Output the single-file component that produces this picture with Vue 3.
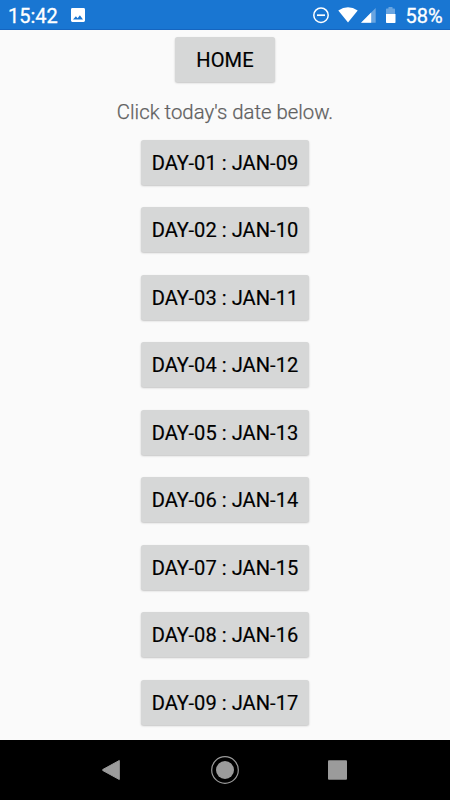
<script setup>
const days = Array.from({ length: 9 }, (_, i) => {
  const day = String(i + 1).padStart(2, '0')
  const date = String(i + 9).padStart(2, '0')
  return `DAY-${day} : JAN-${date}`
})
</script>

<template>
  <div class="screen">
    <header class="status">
      <span class="clock">15:42</span>
      <svg class="picture" width="14" height="14" viewBox="0 0 14 14">
        <path fill="#fff" fill-rule="evenodd" d="M1.4 0h11.2Q14 0 14 1.4v11.2q0 1.4-1.4 1.4H1.4Q0 14 0 12.600V1.400Q0 0 1.400 0zM2 11.500h10L8.900 7.200 6.600 10.300 4.900 8.200z" />
      </svg>
      <svg class="indicators" width="98" height="30" viewBox="0 0 98 30">
        <circle cx="9" cy="15.200" r="7.200" fill="none" stroke="#fff" stroke-width="1.500" />
        <path d="M5 15.200h8" stroke="#fff" stroke-width="1.700" />
        <path d="M26.300 10.600Q36 4 45.700 10.600L36 22.600z" fill="#fff" />
        <path d="M63.700 8v14.800H49z" fill="#fff" fill-opacity=".35" />
        <path d="M59.200 12.400v10.400H49z" fill="#fff" />
        <path d="M74 14V9.300q0-.8.8-.8H76.500V7h4v1.500h1.700q.8 0 .8.800V14z" fill="#fff" fill-opacity=".35" />
        <path d="M74 14h9.500v8.200q0 .8-.8.800h-7.900q-.8 0-.8-.8z" fill="#fff" />
      </svg>
      <span class="percent">58%</span>
    </header>

    <main class="content">
      <button class="btn home">HOME</button>
      <p class="hint">Click today's date below.</p>
      <div class="days">
        <button v-for="day in days" :key="day" class="btn day">{{ day }}</button>
      </div>
    </main>

    <nav class="nav">
      <svg width="450" height="60" viewBox="0 0 450 60">
        <path d="M119.300 20.500v19L102.800 30.500q-.8-.5 0-1z" fill="#9b9b9b" stroke="#9b9b9b" stroke-width="1" stroke-linejoin="round" />
        <circle cx="225" cy="30" r="13.300" fill="none" stroke="#9b9b9b" stroke-width="1.200" />
        <circle cx="225" cy="30" r="9" fill="#9b9b9b" />
        <rect x="328" y="20.300" width="19" height="19.400" rx="1" fill="#9b9b9b" />
      </svg>
    </nav>
  </div>
</template>

<style>
body {
  margin: 0;
  overflow: hidden;
}
</style>

<style scoped>
.screen {
  width: 450px;
  height: 800px;
  display: flex;
  flex-direction: column;
  background: #fafafa;
  font-family: Roboto, "Liberation Sans", sans-serif;
}
.status {
  box-sizing: border-box;
  height: 30px;
  flex: none;
  display: flex;
  align-items: center;
  padding: 0 7.500px 0 8px;
  background: #1976d2;
  border-bottom: 1px solid #1565c0;
  color: #fff;
  font-size: 20px;
  font-weight: 400;
  -webkit-text-stroke: .3px currentColor;
  line-height: 30px;
}
.clock {
  width: 63px;
  padding-top: 2px;
}
.picture {
  display: block;
  margin-top: 1px;
}
.indicators {
  display: block;
  margin-left: auto;
  margin-right: -4.500px;
}
.percent {
  width: 37px;
  padding-top: 2px;
  white-space: nowrap;
}
.content {
  flex: 1;
  min-height: 0;
  display: flex;
  flex-direction: column;
  align-items: center;
  padding-top: 7.300px;
}
.btn {
  box-sizing: border-box;
  flex: none;
  height: 45px;
  padding: 2px 0 0;
  border: 0;
  border-radius: 2.500px;
  background: #d6d7d7;
  box-shadow: 0 1px 2px rgba(0, 0, 0, .22);
  color: #000;
  font-family: inherit;
  font-size: 20.100px;
  font-weight: 400;
  letter-spacing: .04px;
  -webkit-text-stroke: .18px currentColor;
  line-height: 43px;
  white-space: nowrap;
}
.home {
  width: 100px;
}
.hint {
  margin: 18.200px 0 15.200px;
  color: #606060;
  font-size: 20.350px;
  font-weight: 300;
  -webkit-text-stroke: .25px currentColor;
  line-height: 24px;
}
.days {
  display: flex;
  flex-direction: column;
  gap: 22.500px;
}
.day {
  width: 168px;
}
.nav {
  height: 60px;
  flex: none;
  background: #000;
}
.nav svg {
  display: block;
}
</style>
